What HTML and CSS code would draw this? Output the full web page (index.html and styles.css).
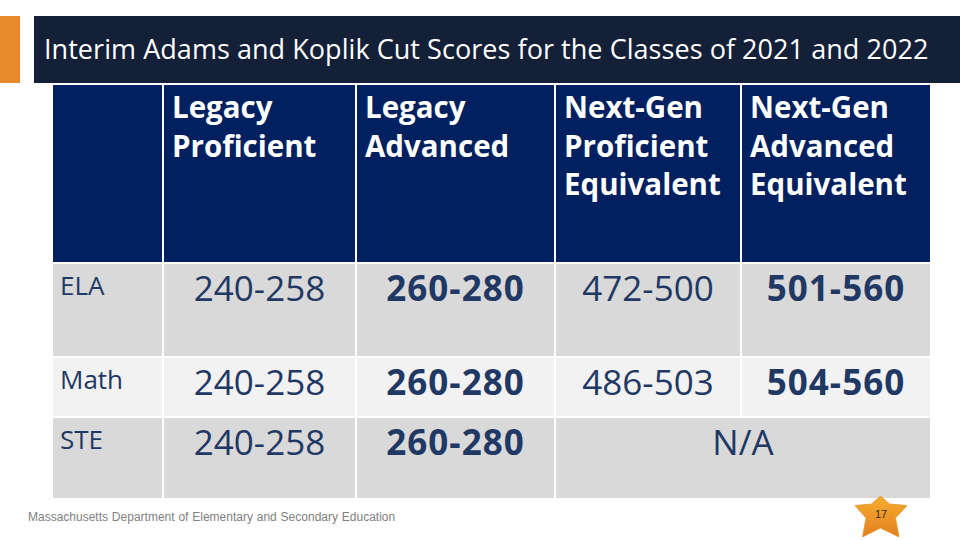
FILE: index.html
```html
<!DOCTYPE html>
<html lang="en">
<head>
<meta charset="utf-8">
<title>Interim Adams and Koplik Cut Scores</title>
<link rel="stylesheet" href="styles.css">
</head>
<body>
<div class="slide">
  <header class="title-row">
    <div class="accent"></div>
    <h1 class="title">Interim Adams and Koplik Cut Scores for the Classes of 2021 and 2022</h1>
  </header>
  <table class="scores">
    <colgroup>
      <col class="c1"><col class="c2"><col class="c3"><col class="c4"><col class="c5">
    </colgroup>
    <thead>
      <tr class="head">
        <th></th>
        <th>Legacy<br>Proficient</th>
        <th>Legacy<br>Advanced</th>
        <th>Next-Gen<br>Proficient<br>Equivalent</th>
        <th>Next-Gen<br>Advanced<br>Equivalent</th>
      </tr>
    </thead>
    <tbody>
      <tr class="r-ela dark">
        <td class="label">ELA</td>
        <td class="num">240-258</td>
        <td class="num bold">260-280</td>
        <td class="num">472-500</td>
        <td class="num bold">501-560</td>
      </tr>
      <tr class="r-math light">
        <td class="label">Math</td>
        <td class="num">240-258</td>
        <td class="num bold">260-280</td>
        <td class="num">486-503</td>
        <td class="num bold">504-560</td>
      </tr>
      <tr class="r-ste dark">
        <td class="label">STE</td>
        <td class="num">240-258</td>
        <td class="num bold">260-280</td>
        <td class="num" colspan="2">N/A</td>
      </tr>
    </tbody>
  </table>
  <footer class="foot">
    <span class="org">Massachusetts Department of Elementary and Secondary Education</span>
    <div class="badge">
      <svg class="star" width="52" height="41" viewBox="0 0 52 41" aria-hidden="true">
        <defs>
          <linearGradient id="sg" x1="0" y1="0" x2="0" y2="1">
            <stop offset="0" stop-color="#f6ad2f"/>
            <stop offset="1" stop-color="#e37f20"/>
          </linearGradient>
        </defs>
        <polygon points="25.5,0 34.5,8 52,9.5 40.5,22 44,41 25.5,32 7.5,41 11,22 0,9.5 16.5,8" fill="url(#sg)" stroke="#e9952a" stroke-width="0.8" stroke-linejoin="round"/>
      </svg>
      <span class="page">17</span>
    </div>
  </footer>
</div>
</body>
</html>
```
FILE: styles.css
```css
html, body {
  margin: 0;
  padding: 0;
  background: #ffffff;
}
.slide {
  width: 960px;
  height: 540px;
  overflow: hidden;
  font-family: "Open Sans", "Noto Sans", sans-serif;
}
.title-row {
  display: flex;
  gap: 14px;
  margin-top: 16px;
  height: 67px;
}
.accent {
  width: 20px;
  flex: none;
  background: #e8892b;
}
.title {
  flex: 1;
  margin: 0;
  background: #141f38;
  color: #ffffff;
  font-weight: 400;
  font-size: 27px;
  letter-spacing: 0.05px;
  line-height: 66px;
  padding-left: 10px;
  white-space: nowrap;
}
.scores {
  margin-left: 51px;
  width: 881px;
  table-layout: fixed;
  border-collapse: separate;
  border-spacing: 2px;
}
.c1 { width: 109px; }
.c2 { width: 191px; }
.c3 { width: 197px; }
.c4 { width: 184px; }
.c5 { width: 188px; }
.scores th, .scores td {
  padding: 0;
  box-sizing: border-box;
}
.head th {
  background: #002060;
  color: #ffffff;
  height: 177px;
  vertical-align: top;
  text-align: left;
  font-weight: 700;
  font-size: 29.5px;
  line-height: 38.5px;
  padding: 3px 2px 0 8px;
  letter-spacing: 0;
  white-space: nowrap;
}
.dark td { background: #d9d9d9; }
.light td { background: #f2f2f2; }
.r-ela td { height: 92px; }
.r-math td { height: 58px; }
.r-ste td { height: 80px; }
.scores td {
  vertical-align: top;
  color: #1f3864;
}
.label {
  font-size: 26px;
  line-height: 34px;
  padding: 4px 0 0 7px !important;
}
.num {
  text-align: center;
  font-size: 35px;
  line-height: 40px;
  padding-top: 4px !important;
}
.num.bold {
  font-weight: 700;
  letter-spacing: 1px;
}
.foot {
  display: flex;
  justify-content: space-between;
  align-items: center;
  padding: 0 53px 0 28px;
  margin-top: -4px;
}
.org {
  font-family: "Liberation Sans", Arial, sans-serif;
  font-size: 12px;
  color: #7f7f7f;
  word-spacing: 0.5px;
}
.badge {
  display: grid;
  place-items: center;
  width: 52px;
  height: 41px;
}
.star, .page {
  grid-area: 1 / 1;
}
.page {
  font-family: "Liberation Sans", Arial, sans-serif;
  font-size: 11px;
  color: #3a2a10;
  margin-top: -5px;
}
```
